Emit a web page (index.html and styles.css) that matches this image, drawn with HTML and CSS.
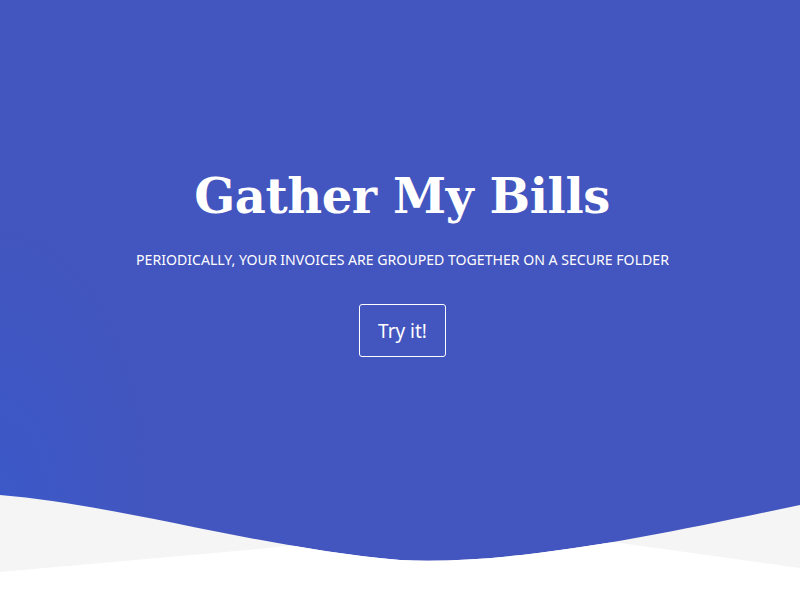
FILE: index.html
```html
<!DOCTYPE html>
<html lang="en">
<head>
<meta charset="utf-8">
<title>Gather My Bills</title>
<link rel="stylesheet" href="styles.css">
</head>
<body>
<section class="hero">
  <div class="hero-content">
    <h1 class="title">Gather My Bills</h1>
    <p class="subtitle">Periodically, your invoices are grouped together on a secure folder</p>
    <a class="cta" href="#">Try it!</a>
  </div>
  <svg class="wave" viewBox="0 490 800 110" preserveAspectRatio="none" aria-hidden="true">
    <defs>
      <clipPath id="below-blue">
        <path d="M0,495 C120,505 260,548 400,560 C520,566 680,530 800,505 L800,600 L0,600 Z"/>
      </clipPath>
    </defs>
    <g clip-path="url(#below-blue)">
      <rect x="0" y="490" width="800" height="110" fill="#f5f5f5"/>
      <path fill="#ffffff" d="M0,572 L270,548 C350,538 500,536 620,543 L800,568 L800,600 L0,600 Z"/>
    </g>
  </svg>
</section>
</body>
</html>
```

FILE: styles.css
```css
html, body {
  margin: 0;
  padding: 0;
  background: #ffffff;
}

.hero {
  height: 600px;
  display: flex;
  flex-direction: column;
  background:
    radial-gradient(ellipse 160px 300px at 0% 85%, rgba(58, 90, 202, 0.85) 0%, rgba(58, 90, 202, 0) 100%),
    #4355be;
  overflow: hidden;
}

.hero-content {
  display: flex;
  flex-direction: column;
  align-items: center;
  padding-top: 162px;
}

.title {
  margin: 0 0 0 4px;
  font-family: "DejaVu Serif", "Liberation Serif", serif;
  font-weight: bold;
  font-size: 48px;
  line-height: 68px;
  color: #ffffff;
  letter-spacing: -0.4px;
}

.subtitle {
  margin: 20px 0 0 5px;
  font-family: "Noto Sans", "Open Sans", sans-serif;
  font-size: 14.1px;
  line-height: 20px;
  text-transform: uppercase;
  color: #ffffff;
}

.cta {
  margin: 34px 0 0 5px;
  width: 87px;
  height: 53px;
  box-sizing: border-box;
  display: flex;
  align-items: center;
  justify-content: center;
  border: 1px solid #ffffff;
  border-radius: 3px;
  font-family: "Noto Sans", "Open Sans", sans-serif;
  font-size: 19px;
  font-weight: 400;
  color: #ffffff;
  text-decoration: none;
}

.wave {
  display: block;
  margin-top: auto;
  width: 800px;
  height: 110px;
}
```
